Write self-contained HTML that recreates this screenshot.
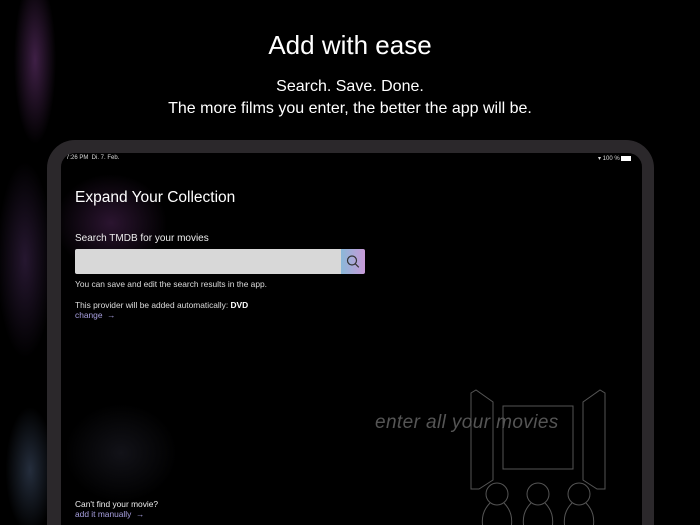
<!DOCTYPE html>
<html style="width:700px;height:525px;overflow:hidden"><head><style>
*{margin:0;padding:0;box-sizing:border-box}
body{width:700px;height:525px;overflow:hidden;background:#000;font-family:"Liberation Sans",sans-serif;position:relative;color:#fff}
.bg{position:absolute;inset:0;background:
radial-gradient(ellipse 30px 120px at 35px 60px,rgba(180,90,200,.35),transparent 70%),
radial-gradient(ellipse 40px 140px at 25px 260px,rgba(150,90,190,.25),transparent 70%),
radial-gradient(ellipse 35px 90px at 30px 470px,rgba(120,150,200,.3),transparent 70%);}
h1{position:absolute;top:30px;width:100%;text-align:center;font-weight:400;font-size:26px}
.sub{position:absolute;top:76px;width:100%;text-align:center;font-size:16px;line-height:22px}
.dev{position:absolute;left:47px;top:140px;width:607px;height:385px;background:#2b282b;border-radius:28px 28px 0 0}
.scr{position:absolute;left:61px;top:153px;width:581px;height:372px;background:#000;border-radius:14px 14px 0 0;overflow:hidden}
.scr .g{position:absolute;inset:0;background:radial-gradient(ellipse 80px 70px at 50px 70px,rgba(170,80,190,.25),transparent 70%),radial-gradient(ellipse 80px 70px at 60px 300px,rgba(120,120,160,.15),transparent 70%)}
.t{position:absolute;font-size:8.4px;color:#ddd;white-space:nowrap}
</style></head><body>
<div class="bg"></div>
<h1>Add with ease</h1>
<div class="sub">Search. Save. Done.<br>The more films you enter, the better the app will be.</div>
<div class="dev"></div>
<div class="scr"><div class="g"></div>
<div class="t" style="left:5px;top:2px;font-size:6px">7:26 PM&nbsp; Di. 7. Feb.</div>
<div class="t" style="left:537px;top:2px;font-size:6px">&#9662; 100 % <span style="display:inline-block;width:10px;height:5px;background:#fff;vertical-align:middle"></span></div>
<div class="t" style="left:14px;top:36px;font-size:15.5px;color:#fff">Expand Your Collection</div>
<div class="t" style="left:14px;top:80px;font-size:10px;color:#eee">Search TMDB for your movies</div>
<div style="position:absolute;left:14px;top:96px;width:266px;height:25px;background:#d8d8d8;border-radius:2px 0 0 2px"></div>
<div style="position:absolute;left:280px;top:96px;width:24px;height:25px;background:linear-gradient(90deg,#8ab8d8,#c89ad8);border-radius:0 2px 2px 0">
<svg width="24" height="25"><circle cx="11" cy="11.5" r="4.5" fill="none" stroke="#333" stroke-width="1.2"/><path d="M14.3 14.8l3.5 3.5" stroke="#333" stroke-width="1.2"/></svg></div>
<div class="t" style="left:14px;top:126px">You can save and edit the search results in the app.</div>
<div class="t" style="left:14px;top:147px">This provider will be added automatically: <b style="color:#fff">DVD</b></div>
<div class="t" style="left:14px;top:157px;color:#a8a0e0">change &nbsp;&rarr;</div>
<div class="t" style="left:14px;top:346px;color:#eee">Can't find your movie?</div>
<div class="t" style="left:14px;top:356px;color:#a8a0e0">add it manually &nbsp;&rarr;</div>
<svg style="position:absolute;left:0;top:0" width="581" height="372" fill="none" stroke="#555" stroke-width="1">
<path d="M410 240 L410 336 L418 336 L432 327 L432 249 L415 237 Z"/>
<rect x="442" y="253" width="70" height="63"/>
<path d="M544 240 L544 336 L536 336 L522 327 L522 249 L539 237 Z"/>
<circle cx="436" cy="341" r="11"/><path d="M429 350 Q419 360 422 375 M443 350 Q453 360 450 375"/>
<circle cx="477" cy="341" r="11"/><path d="M470 350 Q460 360 463 375 M484 350 Q494 360 491 375"/>
<circle cx="518" cy="341" r="11"/><path d="M511 350 Q501 360 504 375 M525 350 Q535 360 532 375"/>
</svg>
<div class="t" style="left:314px;top:259px;font-size:19px;letter-spacing:0.4px;font-style:italic;color:#555">enter all your movies</div>
</div>
</body></html>
